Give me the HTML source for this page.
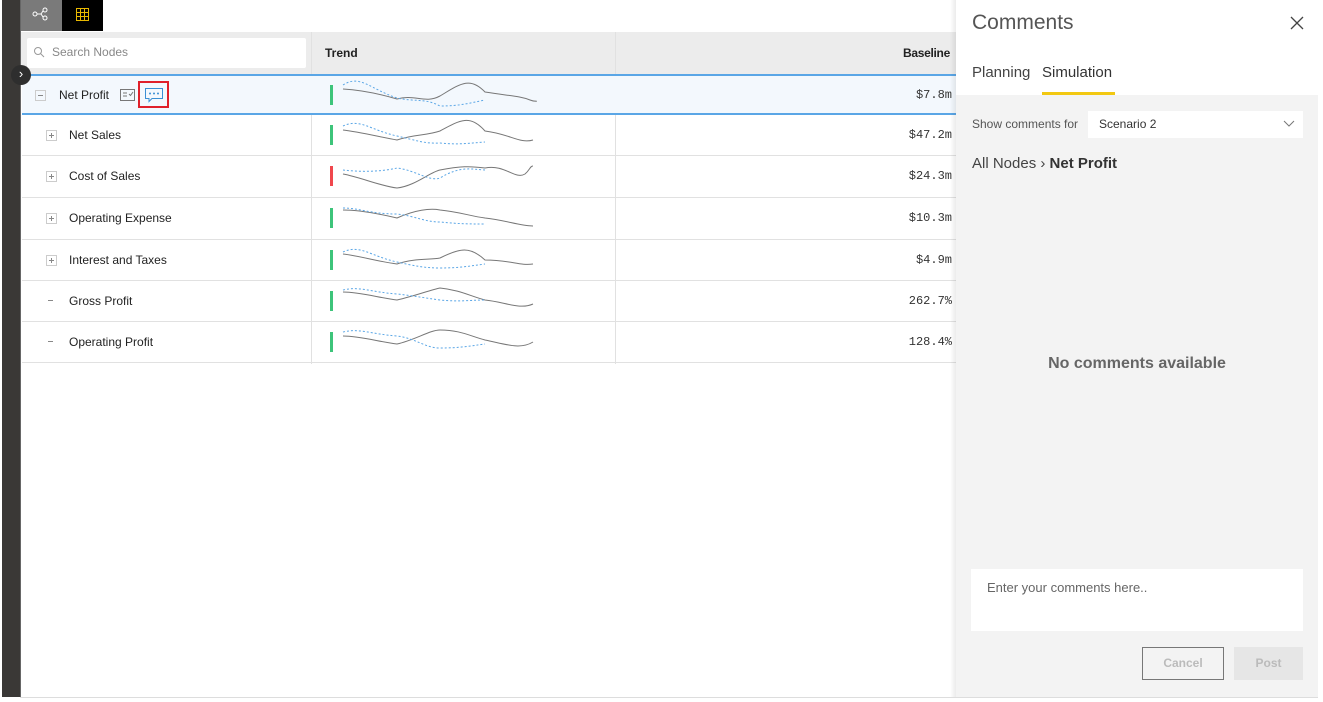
<!DOCTYPE html>
<html><head><meta charset="utf-8"><style>
*{margin:0;padding:0;box-sizing:border-box}
body{width:1323px;height:702px;background:#fff;position:relative;overflow:hidden;font-family:"Segoe UI","Liberation Sans",sans-serif;font-size:12px;color:#222}
.abs{position:absolute}
.row{position:absolute;left:22px;width:934px;height:41px;border-bottom:1px solid #e1e1e1}
.name{position:absolute;top:13px;font-size:12px;color:#222}
.pm{position:absolute;left:24px;top:15px;width:11px;height:11px;border:1px solid #ccc;}
.pm:before{content:"";position:absolute;left:2px;top:4px;width:5px;height:1px;background:#888}
.pm.p:after{content:"";position:absolute;left:4px;top:2px;width:1px;height:5px;background:#888}
.bar{position:absolute;left:308px;top:10px;width:3px;height:20px;background:#3dc47a}
.val{position:absolute;right:4px;top:13px;font-family:"Liberation Mono",monospace;font-size:12px;color:#333}
.vl{position:absolute;top:32px;width:1px;height:332px;background:#e1e1e1}
</style></head><body>
<div class="abs" style="left:2px;top:0;width:18px;height:697px;background:#3a3836"></div>
<div class="abs" style="left:20px;top:0;width:1px;height:697px;background:#666"></div>
<div class="abs" style="left:21px;top:0;width:41px;height:31px;background:#7a7a7a"></div>
<svg class="abs" style="left:32px;top:7px" width="18" height="14"><circle cx="3" cy="7" r="2" fill="none" stroke="#fff"/><circle cx="13" cy="3" r="2" fill="none" stroke="#fff"/><circle cx="13" cy="11" r="2" fill="none" stroke="#fff"/><path d="M5 7H9M9 7L11 4M9 7L11 10" stroke="#fff"/></svg>
<div class="abs" style="left:62px;top:0;width:41px;height:31px;background:#000"></div>
<svg class="abs" style="left:76px;top:8px" width="13" height="13"><rect x="0.5" y="0.5" width="12" height="12" fill="none" stroke="#e8b800"/><path d="M4.5 0V13M8.5 0V13M0 4.5H13M0 8.5H13" stroke="#e8b800"/></svg>
<div class="abs" style="left:21px;top:32px;width:935px;height:42px;background:#ececec"></div>
<div class="abs" style="left:27px;top:38px;width:279px;height:30px;background:#fff;border-radius:2px"></div>
<svg class="abs" style="left:33px;top:46px" width="12" height="12"><circle cx="5" cy="5" r="3.5" fill="none" stroke="#999"/><path d="M7.5 7.5L11 11" stroke="#999"/></svg>
<div class="abs" style="left:52px;top:45px;color:#888;font-size:12px">Search Nodes</div>
<div class="abs" style="left:325px;top:46px;font-weight:bold;font-size:12px">Trend</div>
<div class="abs" style="left:903px;top:46px;font-weight:bold;font-size:12px;letter-spacing:-0.3px">Baseline</div>
<div class="vl" style="left:311px"></div><div class="vl" style="left:615px"></div>

<div class="row" style="top:74px;height:41px;background:#f3f8fd;border-top:2px solid #5aa6e6;border-bottom:2px solid #5aa6e6">
<div class="pm" style="left:13px;top:14px"></div><div class="name" style="left:37px;top:12px">Net Profit</div>
<svg class="abs" style="left:98px;top:13px" width="16" height="13"><rect x="0.5" y="0.5" width="14" height="11" fill="none" stroke="#777"/><path d="M3 4H7M3 7H7M9 5l1.5 1.5L13 3" stroke="#777" fill="none"/></svg>
<div class="abs" style="left:116px;top:5px;width:31px;height:27px;border:2px solid #e0202a"></div>
<svg class="abs" style="left:122px;top:11px" width="20" height="16"><path d="M1.5 1.5H18.5V11.5H8L5 14.5V11.5H1.5Z" fill="none" stroke="#3a8fd4"/><circle cx="6" cy="6.5" r="1" fill="#3a8fd4"/><circle cx="10" cy="6.5" r="1" fill="#3a8fd4"/><circle cx="14" cy="6.5" r="1" fill="#3a8fd4"/></svg>
<div class="bar" style="top:9px"></div>
<div class="val" style="top:12px">$7.8m</div>
</div>
<div class="row" style="top:115px"><div class="pm p"></div><div class="name" style="left:47px">Net Sales</div><div class="bar"></div><div class="val">$47.2m</div></div>
<div class="row" style="top:156px;height:42px"><div class="pm p"></div><div class="name" style="left:47px">Cost of Sales</div><div class="bar" style="background:#f0474d"></div><div class="val">$24.3m</div></div>
<div class="row" style="top:198px;height:42px"><div class="pm p"></div><div class="name" style="left:47px">Operating Expense</div><div class="bar"></div><div class="val">$10.3m</div></div>
<div class="row" style="top:240px"><div class="pm p"></div><div class="name" style="left:47px">Interest and Taxes</div><div class="bar"></div><div class="val">$4.9m</div></div>
<div class="row" style="top:281px"><div class="pm" style="border:none"></div><div class="name" style="left:47px">Gross Profit</div><div class="bar"></div><div class="val">262.7%</div></div>
<div class="row" style="top:322px"><div class="pm" style="border:none"></div><div class="name" style="left:47px">Operating Profit</div><div class="bar"></div><div class="val">128.4%</div></div>

<svg class="abs" style="left:340px;top:74px" width="200" height="290" fill="none" stroke-width="1">
<g stroke="#777"><path d="M3 15C20 16 40 20 57 25C75 20 85 30 100 22C120 10 130 2 145 18C170 22 180 22 190 26C195 28 200 27 193 27"/>
<path d="M3 56C20 58 40 63 57 66C75 60 85 62 100 57C120 46 130 40 145 57C170 60 180 70 193 66"/>
<path d="M3 100C20 103 40 112 57 114C75 112 90 98 100 96C120 92 130 92 145 94C165 90 175 106 185 100C190 96 190 92 193 92"/>
<path d="M3 136C20 136 40 140 57 144C75 136 90 134 100 136C120 138 130 142 145 144C165 146 180 152 193 152"/>
<path d="M3 180C20 182 40 188 57 190C75 184 90 186 100 184C120 174 130 172 145 186C170 186 180 192 193 190"/>
<path d="M3 218C20 218 40 224 57 226C75 222 90 216 100 214C120 216 130 222 145 226C165 228 180 236 193 230"/>
<path d="M3 262C20 262 40 268 57 270C75 266 90 256 100 256C120 256 130 262 145 266C165 270 180 276 193 268"/></g>
<g stroke="#5aa6e6" stroke-dasharray="2 2"><path d="M3 11C20 0 30 15 57 24C75 28 85 24 100 32C120 32 130 29 145 26"/>
<path d="M3 52C20 44 30 56 57 62C75 66 85 70 100 69C120 71 130 69 145 68"/>
<path d="M3 96C20 98 40 98 57 94C75 96 90 108 100 104C120 92 130 95 145 96"/>
<path d="M3 134C20 134 30 140 57 140C75 142 85 148 100 148C120 150 130 150 145 150"/>
<path d="M3 178C20 170 30 182 57 188C75 192 85 194 100 194C120 194 130 192 145 190"/>
<path d="M3 216C20 212 30 218 57 220C75 222 85 224 100 226C120 228 130 226 145 226"/>
<path d="M3 258C20 254 30 260 57 262C75 264 85 274 100 274C120 274 130 272 145 270"/></g>
</svg>

<!-- panel -->
<div class="abs" style="left:950px;top:0;width:6px;height:697px;background:linear-gradient(to right,rgba(0,0,0,0),rgba(0,0,0,0.08))"></div>
<div class="abs" style="left:956px;top:0;width:362px;height:697px;background:#f3f3f3"></div>
<div class="abs" style="left:956px;top:0;width:362px;height:95px;background:#fff"></div>
<div class="abs" style="left:972px;top:11px;font-size:21px;color:#555">Comments</div>
<svg class="abs" style="left:1290px;top:16px" width="14" height="14"><path d="M1 1L13 13M13 1L1 13" stroke="#444" stroke-width="1.3"/></svg>
<div class="abs" style="left:972px;top:64px;font-size:15px;color:#444">Planning</div>
<div class="abs" style="left:1042px;top:64px;font-size:15px;color:#333">Simulation</div>
<div class="abs" style="left:1042px;top:92px;width:73px;height:3px;background:#f2c811"></div>
<div class="abs" style="left:972px;top:117px;font-size:12px;color:#555">Show comments for</div>
<div class="abs" style="left:1088px;top:111px;width:215px;height:27px;background:#fff"></div>
<div class="abs" style="left:1099px;top:117px;font-size:12px;color:#333">Scenario 2</div>
<svg class="abs" style="left:1283px;top:120px" width="12" height="8"><path d="M1 1L6 6L11 1" stroke="#777" fill="none"/></svg>
<div class="abs" style="left:972px;top:155px;font-size:15px;color:#444">All Nodes <span style="font-size:15px">&#8250;</span> <b style="color:#333;font-weight:600">Net Profit</b></div>
<div class="abs" style="left:956px;top:355px;width:362px;text-align:center;font-size:16px;font-weight:600;color:#666">No comments available</div>
<div class="abs" style="left:971px;top:569px;width:332px;height:62px;background:#fff"></div>
<div class="abs" style="left:987px;top:580px;font-size:13px;color:#666">Enter your comments here..</div>
<div class="abs" style="left:1142px;top:647px;width:82px;height:33px;border:1px solid #777;text-align:center;line-height:31px;font-size:12px;font-weight:bold;color:#bbb">Cancel</div>
<div class="abs" style="left:1234px;top:647px;width:69px;height:33px;background:#e6e6e6;text-align:center;line-height:33px;font-size:12px;font-weight:bold;color:#bbb">Post</div>
<div class="abs" style="left:11px;top:65px;width:20px;height:20px;border-radius:50%;background:#2e2e2e;color:#fff;text-align:center;line-height:18px;font-size:13px">&#8250;</div>
<div class="abs" style="left:20px;top:697px;width:1298px;height:1px;background:#ddd"></div>
</body></html>
